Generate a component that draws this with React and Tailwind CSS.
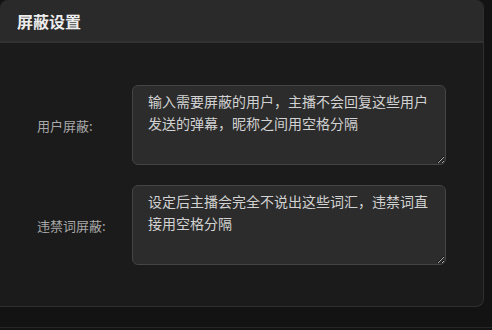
import React from "react";

const rows = [
    {
        label: "用户屏蔽:",
        text: "输入需要屏蔽的用户，主播不会回复这些用户发送的弹幕，昵称之间用空格分隔",
    },
    {
        label: "违禁词屏蔽:",
        text: "设定后主播会完全不说出这些词汇，违禁词直接用空格分隔",
    },
];

export default function App() {
    return (
        <div
            className="w-[492px] h-[330px] bg-[#131313] overflow-hidden"
            style={{ fontFamily: '"Noto Sans CJK SC", "Noto Sans", sans-serif' }}
        >
            <div className="w-[484px] h-[307px] bg-[#1b1b1b] rounded-t-lg rounded-br-lg border-r border-b border-[#2f2f2f] flex flex-col overflow-hidden">
                {/* header */}
                <div className="h-[43px] shrink-0 bg-[#2a2a2a] border-b-2 border-[#323232] flex items-center pl-[17px]">
                    <span className="text-[16px] font-bold text-[#ededed] leading-none">屏蔽设置</span>
                </div>

                {/* body */}
                <div className="flex flex-col gap-[20px] pt-[42px]">
                    {rows.map((row) => (
                        <div key={row.label} className="flex items-center">
                            <label className="w-[132px] pl-[37px] pt-[2px] text-[13px] text-[#a9a9a9]">
                                {row.label}
                            </label>
                            <textarea
                                placeholder={row.text}
                                className="w-[314px] h-[80px] bg-[#2c2c2c] border border-[#444] rounded-md px-[15px] py-[4px] text-[14px] leading-[22px] text-[#d2d2d2] placeholder:text-[#d2d2d2] outline-none"
                                style={{ fontFamily: '"Noto Sans CJK SC", sans-serif' }}
                            />
                        </div>
                    ))}
                </div>
            </div>
            <div className="mt-[20px] h-px bg-[#262626]" />
        </div>
    );
}
